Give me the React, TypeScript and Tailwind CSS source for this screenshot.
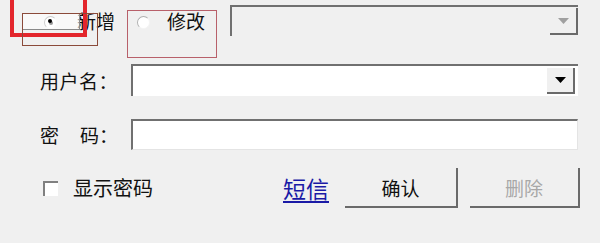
import React from "react";

const font = { fontFamily: '"Noto Sans CJK SC", "Noto Sans", sans-serif' };

function Radio({ checked, faint }: { checked?: boolean; faint?: boolean }) {
  return (
    <span
      className={
        "relative inline-block w-[13px] h-[13px] rounded-full bg-white border border-b-[#f4f4f4] border-r-[#f4f4f4] " +
        (faint ? "border-[#b0b0b0]" : "border-[#808080]")
      }
    >
      {checked && <span className="absolute left-[3.5px] top-[3.5px] w-[4px] h-[4px] rounded-full bg-black" />}
    </span>
  );
}

function DropButton({ disabled }: { disabled?: boolean }) {
  return (
    <div className="h-full w-[28px] flex items-center justify-center border-r-2 border-b-2 border-[#6a6a6a] bg-[#f0f0f0]">
      <svg width="11" height="6" viewBox="0 0 11 6">
        <path d="M0 0 L11 0 L5.5 6 Z" fill={disabled ? "#a0a0a0" : "#000"} />
      </svg>
    </div>
  );
}

export default function App() {
  return (
    <div
      className="relative w-[600px] h-[243px] overflow-hidden bg-[#f0f0f0] text-[#111] pt-[5px]"
      style={font}
    >
      {/* row 1: radios + disabled combo */}
      <div className="flex items-center h-[31px]">
        <div className="w-[230px] flex items-center text-[19px] leading-none">
          <span className="ml-[44px]"><Radio checked /></span>
          <span className="ml-[20px]">新增</span>
          <span className="ml-[22px]"><Radio faint /></span>
          <span className="ml-[17px]">修改</span>
        </div>
        <div className="w-[348px] h-full flex justify-end border-l-2 border-t-2 border-[#707070] bg-[#f0f0f0] py-[1px]">
          <DropButton disabled />
        </div>
      </div>

      {/* row 2: user name */}
      <div className="flex items-center h-[32px] mt-[28px]">
        <div className="w-[131px] pl-[40px] text-[19px] leading-none tracking-[0.5px]">用户名：</div>
        <div className="w-[447px] h-full flex justify-end border-l-2 border-t-2 border-[#707070] bg-white py-[2px] pr-[3px]">
          <DropButton />
        </div>
      </div>

      {/* row 3: password */}
      <div className="flex items-center h-[31px] mt-[23px]">
        <div className="w-[131px] pl-[40px] text-[19px] leading-none flex">
          <span>密</span>
          <span className="ml-[21px]">码：</span>
        </div>
        <div className="w-[447px] h-full border-l-2 border-t-2 border-[#707070] border-b border-r border-b-[#e4e4e4] border-r-[#e4e4e4] bg-white" />
      </div>

      {/* row 4 */}
      <div className="flex items-center h-[40px] mt-[18px]">
        <div className="ml-[43px] w-[15px] h-[15px] bg-white border-l-2 border-t-2 border-[#808080]" />
        <span className="ml-[15px] text-[20px] leading-none">显示密码</span>
        <span className="ml-[130px] text-[23px] leading-none text-[#1a1aa6] underline underline-offset-[3px]">短信</span>
        <button className="ml-[16px] w-[113px] h-full bg-[#f0f0f0] border-r-2 border-b-2 border-[#6a6a6a] text-[19px] leading-none" style={font}>
          确认
        </button>
        <button className="ml-[12px] w-[110px] h-full bg-[#f0f0f0] border-r-2 border-b-2 border-[#6a6a6a] text-[19px] leading-none text-[#a8a8a8]" style={font}>
          删除
        </button>
      </div>

      {/* annotation overlays */}
      <div className="absolute left-[10px] top-[-4px] w-[77px] h-[41px] border-4 border-[#e3262c]" />
      <div className="absolute left-[22px] top-[13px] w-[58px] h-[17px] border border-[#8a8a8a] bg-white/60" />
      <div className="absolute left-[48px] top-[19px] w-[4px] h-[4px] rounded-full bg-black" />
      <div className="absolute left-[22px] top-[13px] w-[76px] h-[33px] border border-[#8b4a3a]" />
      <div className="absolute left-[127px] top-[10px] w-[90px] h-[48px] border border-[#b8606a]" />
    </div>
  );
}
